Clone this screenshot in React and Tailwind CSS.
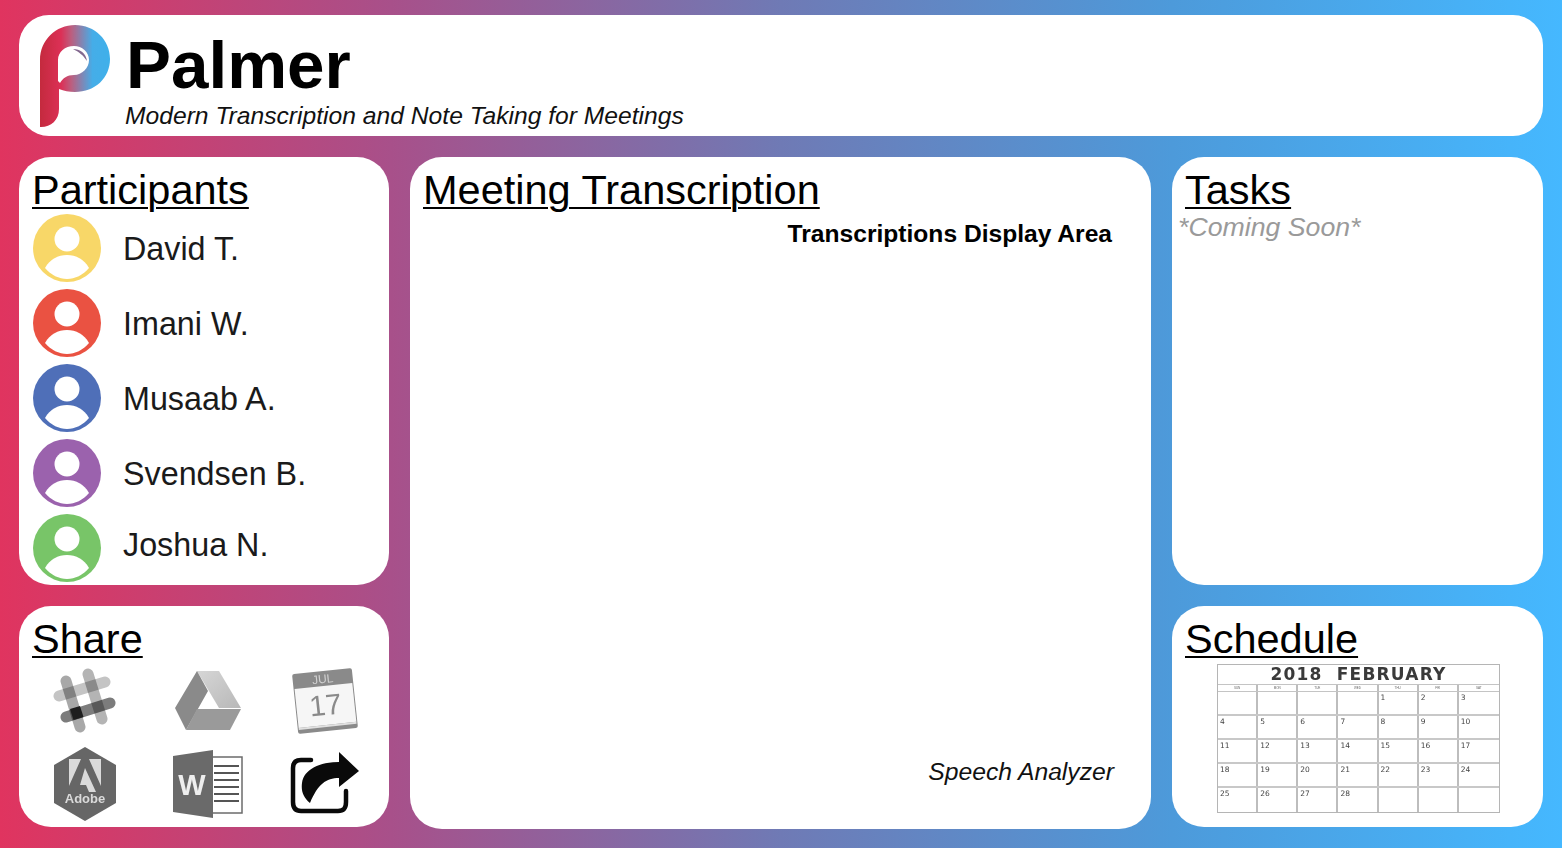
const people = [
  ["David T.", "#f8d768", "translate-y-[1px]"],
  ["Imani W.", "#ea5242", "translate-y-[1px]"],
  ["Musaab A.", "#4f6fb8", "translate-y-[1px]"],
  ["Svendsen B.", "#9b62ad", "translate-y-[1px]"],
  ["Joshua N.", "#78c568", "-translate-y-[3px]"],
];

const calendar = [
  ["", "", "", "", "1", "2", "3"],
  ["4", "5", "6", "7", "8", "9", "10"],
  ["11", "12", "13", "14", "15", "16", "17"],
  ["18", "19", "20", "21", "22", "23", "24"],
  ["25", "26", "27", "28", "", "", ""],
];

function Logo() {
  return (
    <svg width="72" height="104" viewBox="0 0 72 104" className="shrink-0 blur-[0.4px]">
      <defs>
        <linearGradient id="pg" x1="0" x2="1" y1="0" y2="0">
          <stop offset="0" stopColor="#c42a3e" />
          <stop offset="0.3" stopColor="#dc3056" />
          <stop offset="0.45" stopColor="#bb5f80" />
          <stop offset="0.75" stopColor="#45ade8" />
          <stop offset="1" stopColor="#3fb0ea" />
        </linearGradient>
      </defs>
      <path
        fillRule="evenodd"
        fill="url(#pg)"
        d="M0 35 C0 15 16 0 35 0 C55 0 70 15 70 34 C70 53 55 67 35 67 C29 67 24 66 19 64 L19 84 C19 95 11 102 1 102 L0 102 Z M20 58 C23 53 27 50 34 50 C42 50 49 43 49 35 C49 27 42 21 34 21 C25 21 18 27 18 35 L18 56 Z"
      />
      <path d="M33 24 C40 24 46 28 47 36 C43 30 39 27 33 24 Z" fill="#83688f" />
    </svg>
  );
}

function Person({ color }) {
  return (
    <svg width="68" height="68" viewBox="0 0 68 68" className="shrink-0">
      <circle cx="34" cy="34" r="34" fill={color} />
      <circle cx="34" cy="25" r="12.5" fill="#fff" />
      <path d="M12 54 C17 45 25 41 34 41 C43 41 51 45 56 54 C50 61 42 65 34 65 C26 65 18 61 12 54 Z" fill="#fff" />
    </svg>
  );
}

function SlackIcon() {
  return (
    <svg width="68" height="68" viewBox="0 0 68 68" className="blur-[0.6px]">
      <g strokeLinecap="round" strokeWidth="11">
        <line className="mix-blend-multiply" x1="16" y1="14" x2="30" y2="60" stroke="#a8a8a8" />
        <line className="mix-blend-multiply" x1="38" y1="7" x2="52" y2="52" stroke="#b4b4b4" />
        <line className="mix-blend-multiply" x1="9" y1="29" x2="55" y2="15" stroke="#c4c4c4" />
        <line className="mix-blend-multiply" x1="16" y1="50" x2="60" y2="36" stroke="#7c7c7c" />
      </g>
      <path d="M20 42 L30 39 L33.5 50 L23.5 53 Z" fill="#1e1e1e" />
    </svg>
  );
}

function DriveIcon() {
  return (
    <svg width="68" height="62" viewBox="0 0 68 62" className="blur-[0.5px]">
      <defs>
        <linearGradient id="dg1" x1="0" x2="1" y1="0" y2="1">
          <stop offset="0" stopColor="#d6d6d6" />
          <stop offset="1" stopColor="#b8b8b8" />
        </linearGradient>
      </defs>
      <path d="M23 1 L45 1 L67 38 L45 38 Z" fill="url(#dg1)" />
      <path d="M23 1 L34 21 L12 60 L1 38 Z" fill="#8a8a8a" />
      <path d="M23 39 L67 39 L56 60 L12 60 Z" fill="#9a9a9a" />
    </svg>
  );
}

function CalendarIcon() {
  return (
    <svg width="68" height="68" viewBox="0 0 68 68" className="blur-[0.5px]">
      <g transform="rotate(-6 34 34)">
        <rect x="4" y="4" width="60" height="60" rx="2" fill="#8a8a8a" />
        <rect x="5" y="19" width="58" height="39" fill="#f6f6f6" />
        <rect x="5" y="58" width="58" height="2" fill="#e0e0e0" />
        <text x="34" y="16" textAnchor="middle" fontSize="12" fill="#d2d2d2" fontFamily="Liberation Sans, sans-serif">JUL</text>
        <text x="34" y="48" textAnchor="middle" fontSize="29" fill="#8a8a8a" fontFamily="Liberation Sans, sans-serif">17</text>
      </g>
    </svg>
  );
}

function AdobeIcon() {
  return (
    <svg width="64" height="76" viewBox="0 0 64 76" className="blur-[0.5px]">
      <path d="M32 1 L63 19 L63 57 L32 75 L1 57 L1 19 Z" fill="#666" />
      <path d="M16 13 L28 13 L16 40 Z M36 13 L48 13 L48 40 Z" fill="#dadada" />
      <path d="M32 22 L43 46 L36 46 L33 39 L27 39 L32 22 Z" fill="#dadada" />
      <text x="32" y="57" textAnchor="middle" fontSize="13" fontWeight="700" fill="#dadada" fontFamily="Liberation Sans, sans-serif">Adobe</text>
    </svg>
  );
}

function WordIcon() {
  return (
    <svg width="70" height="68" viewBox="0 0 70 68" className="blur-[0.4px]">
      <rect x="38" y="7" width="31" height="56" fill="#fff" stroke="#6b6b6b" strokeWidth="1.5" />
      <g stroke="#555" strokeWidth="2">
        <line x1="41" y1="16" x2="66" y2="16" />
        <line x1="41" y1="23" x2="66" y2="23" />
        <line x1="41" y1="30" x2="66" y2="30" />
        <line x1="41" y1="37" x2="66" y2="37" />
        <line x1="41" y1="44" x2="66" y2="44" />
        <line x1="41" y1="51" x2="66" y2="51" />
      </g>
      <path d="M0 6 L40 0 L40 68 L0 62 Z" fill="#6a6a6a" />
      <text x="19" y="45" textAnchor="middle" fontSize="29" fontWeight="700" fill="#eee" fontFamily="Liberation Sans, sans-serif">W</text>
    </svg>
  );
}

function ShareIcon() {
  return (
    <svg width="70" height="66" viewBox="0 0 70 66" className="blur-[0.4px]">
      <path d="M21 9 L11 9 C5 9 3 12 3 17 L3 51 C3 57 6 60 11 60 L48 60 C54 60 56 57 56 51 L56 40" fill="none" stroke="#0a0a0a" strokeWidth="4.5" strokeLinecap="round" />
      <path d="M49 1 L69 20 L49 36 L49 27 C36 27 28 33 20 52 C13 46 11 40 12 32 C14 18 30 11 49 11 Z" fill="#0a0a0a" />
    </svg>
  );
}

function Heading({ children }) {
  return <h2 className="text-[41.5px] leading-[47px] underline decoration-2 underline-offset-[3px] text-black">{children}</h2>;
}

function Calendar() {
  return (
    <div className="ml-[32px] mt-[2px] w-[283px] border border-[#b5b5b5] text-[#333] blur-[0.3px]">
      <div className="h-[19px] flex items-center justify-center text-[17px] leading-none font-bold tracking-[1.2px] font-['DejaVu_Sans',sans-serif] text-[#3a3a3a]">
        2018&nbsp;&nbsp;FEBRUARY
      </div>
      <div className="grid grid-cols-7 border-y border-[#c4c4c4] h-[8px]">
        {["SUN", "MON", "TUE", "WED", "THU", "FRI", "SAT"].map((d) => (
          <div key={d} className="border-r-2 border-[#bdbdbd] last:border-r-0 text-[3px] leading-[6px] text-center text-[#666]">{d}</div>
        ))}
      </div>
      {calendar.map((row, i) => (
        <div key={i} className="grid grid-cols-7 h-[24px] border-b-2 border-[#c8c8c8] last:border-b-0">
          {row.map((n, j) => (
            <div key={j} className="border-r-2 border-[#bdbdbd] last:border-r-0 pl-[2px] pt-[1px] text-[7.5px] leading-[9px] font-['DejaVu_Sans',sans-serif] text-[#444]">{n}</div>
          ))}
        </div>
      ))}
    </div>
  );
}

export default function App() {
  return (
    <div className="w-[1562px] h-[848px] overflow-hidden bg-[linear-gradient(90deg,#e0345f_0%,#a8508a_25%,#6f7ab5_50%,#4d9ada_75%,#45b8ff_100%)] px-[19px] pt-[15px] font-['Liberation_Sans',Arial,sans-serif] text-black">
      <header className="h-[121px] bg-white rounded-[30px] flex pl-[21px] pt-[10px] gap-[14px]">
        <Logo />
        <div className="flex flex-col">
          <h1 className="text-[67.4px] leading-[62px] mt-[9px] font-bold">Palmer</h1>
          <p className="text-[24.65px] leading-[30px] italic -ml-[1px] mt-[5px] text-[#111]">Modern Transcription and Note Taking for Meetings</p>
        </div>
      </header>

      <main className="grid grid-cols-[370px_741px_371px] grid-rows-[428px_221px] gap-[21px] mt-[21px]">
        <section className="bg-white rounded-[32px] pl-[13px] pt-[9px]">
          <Heading>Participants</Heading>
          <ul className="flex flex-col gap-[7px] mt-[1px] ml-[1px]">
            {people.map(([name, color, shift]) => (
              <li key={name} className="flex items-center gap-[22px]">
                <Person color={color} />
                <span className={`text-[32.3px] leading-none text-[#1a1a1a] ${shift}`}>{name}</span>
              </li>
            ))}
          </ul>
        </section>

        <section className="row-span-2 h-[672px] bg-white rounded-[32px] pl-[13px] pt-[9px] pr-[39px] pb-[42px] flex flex-col">
          <Heading>Meeting Transcription</Heading>
          <p className="self-end mt-[6px] text-[24.6px] leading-[30px] font-bold">Transcriptions Display Area</p>
          <p className="self-end mt-auto -mr-[2px] text-[24.7px] leading-[30px] italic text-[#111]">Speech Analyzer</p>
        </section>

        <section className="bg-white rounded-[32px] pl-[13px] pt-[9px]">
          <Heading>Tasks</Heading>
          <p className="-ml-[7px] -mt-[2px] text-[26.7px] leading-[32px] italic text-[#9a9a9a]">*Coming Soon*</p>
        </section>

        <section className="bg-white rounded-[32px] pl-[13px] pt-[9px]">
          <Heading>Share</Heading>
          <div className="grid grid-cols-[121px_118px_auto] mt-[5px] ml-[18px] items-center w-fit gap-y-[11px]">
            <SlackIcon />
            <div className="ml-[3px]"><DriveIcon /></div>
            <div className="ml-[2px]"><CalendarIcon /></div>
            <div className="ml-[3px]"><AdobeIcon /></div>
            <div className="ml-[2px]"><WordIcon /></div>
            <div className="ml-[1px]"><ShareIcon /></div>
          </div>
        </section>

        <section className="bg-white rounded-[32px] pl-[13px] pt-[9px]">
          <Heading>Schedule</Heading>
          <Calendar />
        </section>
      </main>
    </div>
  );
}
